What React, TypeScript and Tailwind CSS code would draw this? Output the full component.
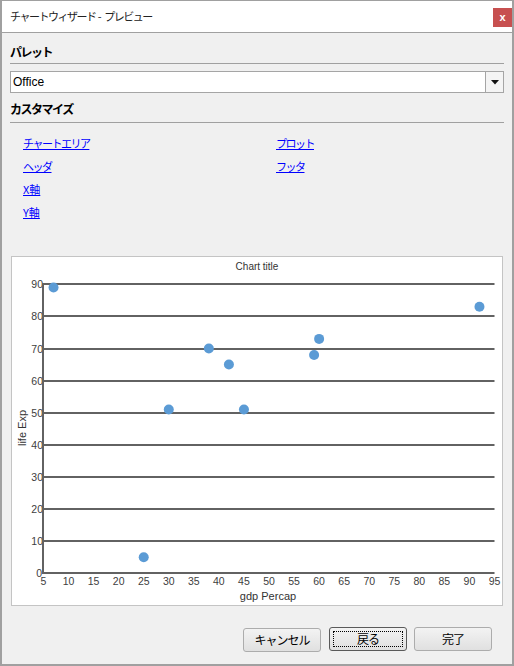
import React from 'react'

const jp = '"Noto Sans CJK JP", "Liberation Sans", sans-serif'
const sans = '"Liberation Sans", Arial, sans-serif'

// scatter data: gdp Percap vs life Exp
const points: [number, number][] = [
  [7, 89],
  [25, 5],
  [30, 51],
  [38, 70],
  [42, 65],
  [45, 51],
  [59, 68],
  [60, 73],
  [92, 83],
]

const xs = (v: number) => 31.5 + ((v - 5) * 451) / 90
const ys = (v: number) => 316.3 - (v * 289) / 90

const ScatterChart: React.FC = () => {
  const yTicks = [0, 10, 20, 30, 40, 50, 60, 70, 80, 90]
  const xTicks = Array.from({ length: 19 }, (_, i) => 5 + i * 5)
  return (
    <svg width={490} height={348} style={{ fontFamily: sans }}>
      <text x={245} y={13} fontSize={10} fill="#333" textAnchor="middle">
        Chart title
      </text>
      {yTicks.map((v) => {
        const y = Math.round(ys(v))
        return (
          <g key={v}>
            <line x1={31} x2={482.5} y1={y} y2={y} stroke="#626262" strokeWidth={2} />
            <text x={v === 0 ? 30 : 31} y={y + 4} fontSize={10.5} fill="#404040" textAnchor="end">
              {v}
            </text>
          </g>
        )
      })}
      <line x1={31} x2={31} y1={26} y2={317} stroke="#626262" strokeWidth={2} />
      {xTicks.map((v) => (
        <text key={v} x={xs(v)} y={327.5} fontSize={10.5} fill="#404040" textAnchor="middle">
          {v}
        </text>
      ))}
      <text x={256} y={343} fontSize={11} fill="#333" textAnchor="middle">
        gdp Percap
      </text>
      <text
        x={0}
        y={0}
        fontSize={11}
        fill="#333"
        textAnchor="middle"
        transform="translate(14 171) rotate(-90)"
      >
        life Exp
      </text>
      {points.map(([x, y], i) => (
        <circle key={i} cx={xs(x)} cy={ys(y)} r={5} fill="#5b9bd5" />
      ))}
    </svg>
  )
}

const links: string[] = ['チャートエリア', 'プロット', 'ヘッダ', 'フッタ', 'X軸', '', 'Y軸', '']

const DialogButton: React.FC<{ label: string; focused?: boolean }> = ({ label, focused }) => (
  <button
    className={
      focused
        ? 'relative w-[78px] h-[24px] rounded-[3px] border border-[#5a5a5a] bg-linear-to-b from-[#f3f3f3] to-[#e0e0e0] text-[12px] tracking-[-1px] text-black'
        : 'relative w-[78px] h-[24px] rounded-[3px] border border-[#acacac] bg-linear-to-b from-[#f3f3f3] to-[#e0e0e0] text-[12px] tracking-[-1px] text-black'
    }
    style={{ fontFamily: jp }}
  >
    {focused && <span className="absolute inset-[3px] border border-dotted border-black" />}
    {label}
  </button>
)

export default function App() {
  return (
    <div className="w-[514px] h-[666px] flex flex-col border-x-2 border-t border-b-2 border-[#a0a0a0] bg-[#f0f0f0]">
      {/* Title bar */}
      <div className="h-[32px] flex-shrink-0 flex items-center justify-between bg-white border-b border-[#a0a0a0] pl-2">
        <span className="text-[11px] text-[#222]" style={{ fontFamily: jp }}>
          <span className="tracking-[-1.5px]">チャートウィザード</span>
          <span> - </span>
          <span className="tracking-[-1.5px]">プレビュー</span>
        </span>
        <div
          className="w-[19px] h-[19px] mt-[2px] flex items-center justify-center bg-[#c75050] text-white text-[11px] font-bold leading-none"
          style={{ fontFamily: sans }}
        >
          x
        </div>
      </div>

      {/* Body */}
      <div className="flex-1 flex flex-col px-2">
        <div className="pt-[10px] text-[12px] leading-[18px] font-bold tracking-[-1.5px] text-black" style={{ fontFamily: jp }}>
          パレット
        </div>
        <div className="mt-[2px] h-px bg-[#a0a0a0]" />

        <div className="mt-[7px] h-[22px] flex bg-white border border-[#a5a5a5]">
          <div className="flex-1 flex items-center pl-[2px] text-[12px] text-black" style={{ fontFamily: sans }}>
            Office
          </div>
          <div className="w-[18px] flex items-center justify-center border-l border-[#a5a5a5] bg-[#f4f4f4]">
            <svg width={8} height={5} viewBox="0 0 8 5">
              <path d="M0 0h8L4 4.5z" fill="#111" />
            </svg>
          </div>
        </div>

        <div className="mt-[7px] text-[12px] leading-[18px] font-bold tracking-[-1.5px] text-black" style={{ fontFamily: jp }}>
          カスタマイズ
        </div>
        <div className="mt-[4px] h-px bg-[#a0a0a0]" />

        <div className="mt-[8px] mb-px ml-[13px] grid grid-cols-[253px_1fr] auto-rows-[23px]">
          {links.map((l, i) => (
            <div key={i} className="flex items-center">
              {l && (
                <a
                  href="#"
                  className={
                    l.length === 2
                      ? 'text-[11px] tracking-[0px] text-[#0000ff] underline leading-[14px]'
                      : 'text-[11px] tracking-[-1.5px] text-[#0000ff] underline leading-[14px]'
                  }
                  style={{ fontFamily: jp }}
                >
                  {l}
                </a>
              )}
            </div>
          ))}
        </div>

        {/* Chart preview */}
        <div className="mt-[32px] ml-px w-[492px] h-[350px] bg-white border border-[#c4c4c4]">
          <ScatterChart />
        </div>

        <div className="mt-[21px] mr-[12px] flex justify-end gap-[7px]">
          <div className="mr-px">
            <DialogButton label="キャンセル" />
          </div>
          <DialogButton label="戻る" focused />
          <DialogButton label="完了" />
        </div>
      </div>
    </div>
  )
}
